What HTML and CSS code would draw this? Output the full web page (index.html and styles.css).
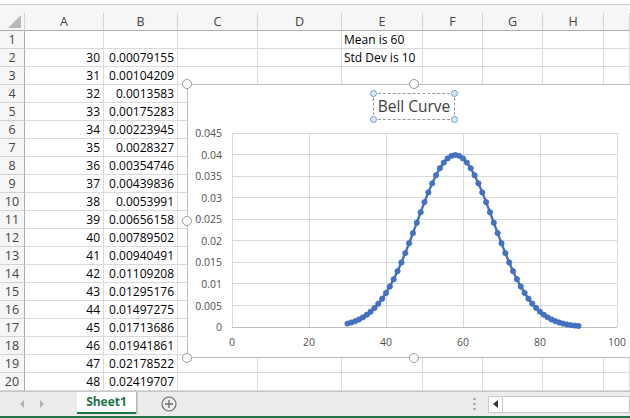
FILE: index.html
```html
<!DOCTYPE html>
<html>
<head>
<meta charset="utf-8">
<link rel="stylesheet" href="styles.css">
</head>
<body>
<div class="app">
  <div class="topstrip"></div>
  <div class="sheet">
    <div class="r hdr">
      <div class="c corner"><span class="tri"></span></div>
      <div class="c">A</div><div class="c">B</div><div class="c">C</div><div class="c">D</div><div class="c">E</div><div class="c">F</div><div class="c">G</div><div class="c">H</div><div class="c"></div>
    </div>
    <div class="r"><div class="c rh">1</div><div class="c n"></div><div class="c n"></div><div class="c"></div><div class="c"></div><div class="c t">Mean is 60</div><div class="c"></div><div class="c"></div><div class="c"></div><div class="c"></div></div>
    <div class="r"><div class="c rh">2</div><div class="c n">30</div><div class="c n">0.00079155</div><div class="c"></div><div class="c"></div><div class="c t">Std Dev is 10</div><div class="c"></div><div class="c"></div><div class="c"></div><div class="c"></div></div>
    <div class="r"><div class="c rh">3</div><div class="c n">31</div><div class="c n">0.00104209</div><div class="c"></div><div class="c"></div><div class="c"></div><div class="c"></div><div class="c"></div><div class="c"></div><div class="c"></div></div>
    <div class="r"><div class="c rh">4</div><div class="c n">32</div><div class="c n">0.0013583</div><div class="c"></div><div class="c"></div><div class="c"></div><div class="c"></div><div class="c"></div><div class="c"></div><div class="c"></div></div>
    <div class="r"><div class="c rh">5</div><div class="c n">33</div><div class="c n">0.00175283</div><div class="c"></div><div class="c"></div><div class="c"></div><div class="c"></div><div class="c"></div><div class="c"></div><div class="c"></div></div>
    <div class="r"><div class="c rh">6</div><div class="c n">34</div><div class="c n">0.00223945</div><div class="c"></div><div class="c"></div><div class="c"></div><div class="c"></div><div class="c"></div><div class="c"></div><div class="c"></div></div>
    <div class="r"><div class="c rh">7</div><div class="c n">35</div><div class="c n">0.0028327</div><div class="c"></div><div class="c"></div><div class="c"></div><div class="c"></div><div class="c"></div><div class="c"></div><div class="c"></div></div>
    <div class="r"><div class="c rh">8</div><div class="c n">36</div><div class="c n">0.00354746</div><div class="c"></div><div class="c"></div><div class="c"></div><div class="c"></div><div class="c"></div><div class="c"></div><div class="c"></div></div>
    <div class="r"><div class="c rh">9</div><div class="c n">37</div><div class="c n">0.00439836</div><div class="c"></div><div class="c"></div><div class="c"></div><div class="c"></div><div class="c"></div><div class="c"></div><div class="c"></div></div>
    <div class="r"><div class="c rh">10</div><div class="c n">38</div><div class="c n">0.0053991</div><div class="c"></div><div class="c"></div><div class="c"></div><div class="c"></div><div class="c"></div><div class="c"></div><div class="c"></div></div>
    <div class="r"><div class="c rh">11</div><div class="c n">39</div><div class="c n">0.00656158</div><div class="c"></div><div class="c"></div><div class="c"></div><div class="c"></div><div class="c"></div><div class="c"></div><div class="c"></div></div>
    <div class="r"><div class="c rh">12</div><div class="c n">40</div><div class="c n">0.00789502</div><div class="c"></div><div class="c"></div><div class="c"></div><div class="c"></div><div class="c"></div><div class="c"></div><div class="c"></div></div>
    <div class="r"><div class="c rh">13</div><div class="c n">41</div><div class="c n">0.00940491</div><div class="c"></div><div class="c"></div><div class="c"></div><div class="c"></div><div class="c"></div><div class="c"></div><div class="c"></div></div>
    <div class="r"><div class="c rh">14</div><div class="c n">42</div><div class="c n">0.01109208</div><div class="c"></div><div class="c"></div><div class="c"></div><div class="c"></div><div class="c"></div><div class="c"></div><div class="c"></div></div>
    <div class="r"><div class="c rh">15</div><div class="c n">43</div><div class="c n">0.01295176</div><div class="c"></div><div class="c"></div><div class="c"></div><div class="c"></div><div class="c"></div><div class="c"></div><div class="c"></div></div>
    <div class="r"><div class="c rh">16</div><div class="c n">44</div><div class="c n">0.01497275</div><div class="c"></div><div class="c"></div><div class="c"></div><div class="c"></div><div class="c"></div><div class="c"></div><div class="c"></div></div>
    <div class="r"><div class="c rh">17</div><div class="c n">45</div><div class="c n">0.01713686</div><div class="c"></div><div class="c"></div><div class="c"></div><div class="c"></div><div class="c"></div><div class="c"></div><div class="c"></div></div>
    <div class="r"><div class="c rh">18</div><div class="c n">46</div><div class="c n">0.01941861</div><div class="c"></div><div class="c"></div><div class="c"></div><div class="c"></div><div class="c"></div><div class="c"></div><div class="c"></div></div>
    <div class="r"><div class="c rh">19</div><div class="c n">47</div><div class="c n">0.02178522</div><div class="c"></div><div class="c"></div><div class="c"></div><div class="c"></div><div class="c"></div><div class="c"></div><div class="c"></div></div>
    <div class="r"><div class="c rh">20</div><div class="c n">48</div><div class="c n">0.02419707</div><div class="c"></div><div class="c"></div><div class="c"></div><div class="c"></div><div class="c"></div><div class="c"></div><div class="c"></div></div>
  </div>

  <div class="tabbar">
    <div class="navs">
      <svg class="nav" width="8" height="10" viewBox="0 0 8 10"><path d="M6 1 L2 5 L6 9 Z" fill="#b4b4b4"/></svg>
      <svg class="nav" width="8" height="10" viewBox="0 0 8 10"><path d="M2 1 L6 5 L2 9 Z" fill="#b4b4b4"/></svg>
    </div>
    <div class="tab">Sheet1</div>
    <svg class="plus" width="16" height="16" viewBox="0 0 16 16"><circle cx="8" cy="8" r="7" fill="none" stroke="#6d6d6d" stroke-width="1.2"/><path d="M8 4 V12 M4 8 H12" stroke="#6d6d6d" stroke-width="1.3"/></svg>
    <div class="spacer"></div>
    <svg class="dots" width="3" height="14" viewBox="0 0 3 14"><rect x="0.5" y="1" width="2" height="2" fill="#9a9a9a"/><rect x="0.5" y="6" width="2" height="2" fill="#9a9a9a"/><rect x="0.5" y="11" width="2" height="2" fill="#9a9a9a"/></svg>
    <div class="scrollbtn"><svg width="6" height="8" viewBox="0 0 6 8"><path d="M5 0 L0 4 L5 8 Z" fill="#333"/></svg></div>
    <div class="track"></div>
  </div>
  <div class="statusline"></div>

  <div class="chart">
    <span class="h h-tl"></span><span class="h h-tm"></span><span class="h h-ml"></span><span class="h h-bl"></span><span class="h h-bm"></span>
    <div class="title"><span class="th th1"></span><span class="th th2"></span><span class="th th3"></span><span class="th th4"></span>Bell Curve</div>
    <svg class="plot" width="443" height="272" viewBox="0 0 443 272">
      <defs>
        <marker id="dot" markerUnits="userSpaceOnUse" markerWidth="8" markerHeight="8" refX="4" refY="4" viewBox="0 0 8 8">
          <circle cx="4" cy="4" r="2.7" fill="#4472c4" stroke="#3d67b1" stroke-width="0.6"/>
        </marker>
      </defs>
      <g stroke="#d9d9d9" stroke-width="1" shape-rendering="crispEdges">
        <line x1="45" y1="49" x2="430" y2="49"/>
        <line x1="45" y1="70.5" x2="430" y2="70.5"/>
        <line x1="45" y1="92" x2="430" y2="92"/>
        <line x1="45" y1="113.5" x2="430" y2="113.5"/>
        <line x1="45" y1="135" x2="430" y2="135"/>
        <line x1="45" y1="156.5" x2="430" y2="156.5"/>
        <line x1="45" y1="178" x2="430" y2="178"/>
        <line x1="45" y1="199.5" x2="430" y2="199.5"/>
        <line x1="45" y1="221.5" x2="430" y2="221.5"/>
        <line x1="122.5" y1="49" x2="122.5" y2="243"/>
        <line x1="199.5" y1="49" x2="199.5" y2="243"/>
        <line x1="276.5" y1="49" x2="276.5" y2="243"/>
        <line x1="353.5" y1="49" x2="353.5" y2="243"/>
        <line x1="430.5" y1="49" x2="430.5" y2="243"/>
        <line x1="45.5" y1="49" x2="45.5" y2="243"/>
      </g>
      <line x1="45" y1="243.5" x2="430" y2="243.5" stroke="#bfbfbf" stroke-width="1" shape-rendering="crispEdges"/>
      <g class="ylab" text-anchor="end">
        <text x="35" y="53">0.045</text>
        <text x="35" y="74.5">0.04</text>
        <text x="35" y="96">0.035</text>
        <text x="35" y="117.5">0.03</text>
        <text x="35" y="139">0.025</text>
        <text x="35" y="160.5">0.02</text>
        <text x="35" y="182">0.015</text>
        <text x="35" y="203.5">0.01</text>
        <text x="35" y="225.5">0.005</text>
        <text x="35" y="247">0</text>
      </g>
      <g class="xlab" text-anchor="middle">
        <text x="45" y="262">0</text>
        <text x="122" y="262">20</text>
        <text x="199" y="262">40</text>
        <text x="276" y="262">60</text>
        <text x="353" y="262">80</text>
        <text x="430" y="262">100</text>
      </g>
      <polyline fill="none" stroke="#4472c4" stroke-width="2.4" stroke-linejoin="round" marker-start="url(#dot)" marker-mid="url(#dot)" marker-end="url(#dot)"
        points="160.5,239.59 164.35,238.51 168.2,237.14 172.05,235.44 175.9,233.35 179.75,230.79 183.6,227.71 187.45,224.04 191.3,219.72 195.15,214.71 199,208.96 202.85,202.45 206.7,195.18 210.55,187.16 214.4,178.45 218.25,169.12 222.1,159.28 225.95,149.08 229.8,138.68 233.65,128.29 237.5,118.11 241.35,108.38 245.2,99.34 249.05,91.22 252.9,84.23 256.75,78.58 260.6,74.42 264.45,71.87 268.3,71.01 272.15,71.87 276,74.42 279.85,78.58 283.7,84.23 287.55,91.22 291.4,99.34 295.25,108.38 299.1,118.11 302.95,128.29 306.8,138.68 310.65,149.08 314.5,159.28 318.35,169.12 322.2,178.45 326.05,187.16 329.9,195.18 333.75,202.45 337.6,208.96 341.45,214.71 345.3,219.72 349.15,224.04 353,227.71 356.85,230.79 360.7,233.35 364.55,235.44 368.4,237.14 372.25,238.51 376.1,239.59 379.95,240.43 383.8,241.09 387.65,241.59 391.5,241.97"/>
    </svg>
  </div>
</div>
</body>
</html>
```

FILE: styles.css
```css
* { box-sizing: border-box; }
html, body { margin: 0; padding: 0; }
body {
  width: 630px;
  height: 418px;
  overflow: hidden;
  background: #fff;
  font-family: "Open Sans", "Lato", sans-serif;
  color: #000;
}
.app { position: relative; width: 630px; height: 418px; overflow: hidden; }

.topstrip {
  height: 13px;
  border-top: 4px solid #fff;
  background: #f6f6f6;
  box-shadow: inset 0 1px 0 #c8c8c8;
}

.sheet { display: flex; flex-direction: column; }
.r {
  display: grid;
  grid-template-columns: 25px 79px 74px 80px 84px 81px 60px 60px 61px 26px;
  height: 18px;
}
.c {
  border-right: 1px solid #dadada;
  border-bottom: 1px solid #dadada;
  font-size: 12px;
  line-height: 17px;
  white-space: nowrap;
  overflow: visible;
  color: #000;
}
.hdr .c {
  background: #f6f6f6;
  border-right-color: #d2d2d2;
  border-bottom: 1px solid #ababab;
  text-align: center;
  color: #444;
  font-size: 12.5px;
  line-height: 17px;
}
.corner { display: flex; align-items: flex-end; justify-content: flex-end; padding: 0 3px 2px 0; }
.tri {
  width: 13px; height: 13px;
  background: #b9b9b9;
  clip-path: polygon(100% 0, 100% 100%, 0 100%);
}
.rh {
  background: #f6f6f6;
  border-right-color: #ababab;
  border-bottom-color: #d2d2d2;
  text-align: center;
  color: #444;
  font-size: 12.5px;
}
.n { text-align: right; padding-right: 3px; }
.t { padding-left: 2px; overflow: visible; }

.tabbar {
  height: 25px;
  background: #ececec;
  border-top: 1px solid #c6c6c6;
  display: flex;
  align-items: center;
}
.navs { width: 77px; display: flex; gap: 12px; padding-left: 18px; align-items: center; }
.tab {
  align-self: flex-start;
  width: 59px;
  height: 22px;
  background: #fff;
  color: #217346;
  font-weight: 700;
  font-size: 12px;
  text-align: center;
  line-height: 20px;
  border-bottom: 2px solid #217346;
  box-shadow: 1px 0 0 #b5b5b5, 2px 0 1px #d0d0d0;
}
.plus { margin-left: 25px; }
.spacer { flex: 1; }
.dots { margin-right: 12px; }
.scrollbtn {
  width: 15px; height: 17px;
  background: #fff;
  border: 1px solid #c9c9c9;
  display: flex; align-items: center; justify-content: center;
}
.track {
  width: 127px; height: 17px;
  background: #fff;
  border: 1px solid #c9c9c9;
  border-left: none;
}
.statusline { height: 2px; background: #217346; }

.chart {
  position: absolute;
  left: 187px;
  top: 84px;
  width: 454px;
  height: 274px;
  background: #fff;
  border: 1px solid #bdbdbd;
}
.plot { position: absolute; left: -1px; top: -1px; overflow: visible; }
.ylab text, .xlab text { font-family: "Open Sans", sans-serif; font-size: 10.5px; fill: #505050; }
.h {
  position: absolute;
  width: 10px; height: 10px;
  border-radius: 50%;
  background: #fff;
  border: 1px solid #9b9b9b;
  z-index: 2;
}
.h-tl { left: -6px; top: -6px; }
.h-tm { left: 221px; top: -6px; }
.h-ml { left: -6px; top: 131px; }
.h-bl { left: -6px; top: 268px; }
.h-bm { left: 221px; top: 268px; }

.title {
  position: absolute;
  left: 185px;
  top: 8px;
  width: 82px;
  height: 27px;
  border: 1px dashed #9a9a9a;
  text-align: center;
  font-size: 15.5px;
  line-height: 25px;
  color: #404040;
  z-index: 2;
}
.th {
  position: absolute;
  width: 7px; height: 7px;
  border-radius: 50%;
  background: #dbe8f3;
  border: 1px solid #6f9dc6;
}
.th1 { left: -4px; top: -4px; }
.th2 { right: -4px; top: -4px; }
.th3 { left: -4px; bottom: -4px; }
.th4 { right: -4px; bottom: -4px; }
```
